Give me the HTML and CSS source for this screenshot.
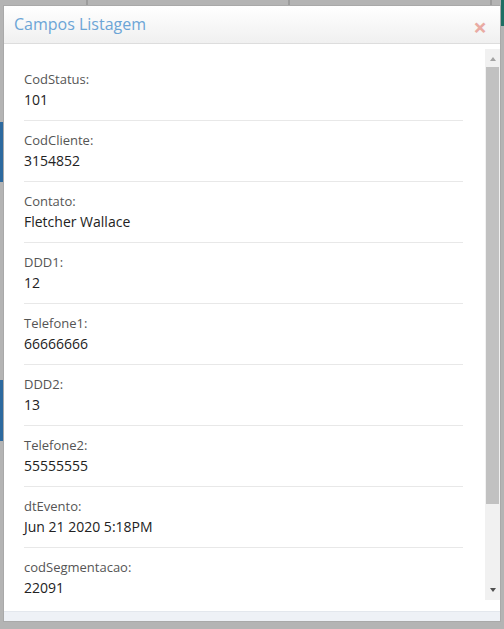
FILE: index.html
```html
<!DOCTYPE html>
<html lang="pt">
<head>
<meta charset="utf-8">
<title>Campos Listagem</title>
<link rel="stylesheet" href="styles.css">
</head>
<body>
<div class="backdrop">
  <span class="bg-line bg-line-1"></span>
  <span class="bg-line bg-line-2"></span>
  <span class="bg-line bg-line-3"></span>
  <span class="bg-teal"></span>
  <span class="bg-blue bg-blue-1"></span>
  <span class="bg-blue bg-blue-2"></span>
</div>
<div class="modal">
  <div class="modal-header">
    <h4 class="modal-title">Campos Listagem</h4>
    <span class="close">&times;</span>
  </div>
  <div class="modal-body">
    <div class="scroll">
      <div class="item"><div class="label">CodStatus:</div><div class="value">101</div></div>
      <div class="item"><div class="label">CodCliente:</div><div class="value">3154852</div></div>
      <div class="item"><div class="label">Contato:</div><div class="value">Fletcher Wallace</div></div>
      <div class="item"><div class="label">DDD1:</div><div class="value">12</div></div>
      <div class="item"><div class="label">Telefone1:</div><div class="value">66666666</div></div>
      <div class="item"><div class="label">DDD2:</div><div class="value">13</div></div>
      <div class="item"><div class="label">Telefone2:</div><div class="value">55555555</div></div>
      <div class="item"><div class="label">dtEvento:</div><div class="value">Jun 21 2020 5:18PM</div></div>
      <div class="item"><div class="label">codSegmentacao:</div><div class="value">22091</div></div>
    </div>
    <div class="scrollbar" aria-hidden="true">
      <div class="sb-btn sb-up"><span class="arrow-up"></span></div>
      <div class="sb-track"><div class="sb-thumb"></div></div>
      <div class="sb-btn sb-down"><span class="arrow-down"></span></div>
    </div>
  </div>
  <div class="modal-footer"></div>
</div>
</body>
</html>
```
FILE: styles.css
```css
html, body {
  margin: 0;
  padding: 0;
}
body {
  width: 504px;
  height: 629px;
  overflow: hidden;
  background: #b4b4b4;
  font-family: "Open Sans", "Liberation Sans", sans-serif;
  position: relative;
  padding: 5px 3px 0 3px;
  box-sizing: border-box;
}
.backdrop {
  position: absolute;
  inset: 0;
}
.bg-line {
  position: absolute;
  top: 0;
  height: 6px;
  width: 2px;
  background: #9c9c9c;
}
.bg-line-1 { left: 86px; }
.bg-line-2 { left: 288px; }
.bg-line-3 { left: 490px; }
.bg-teal {
  position: absolute;
  right: 0;
  top: 0;
  width: 3px;
  height: 26px;
  background: #1e6e63;
}
.bg-blue {
  position: absolute;
  left: 0;
  width: 3px;
  background: #2d6a9f;
}
.bg-blue-1 { top: 122px; height: 60px; }
.bg-blue-2 { top: 380px; height: 61px; }

.modal {
  position: relative;
  width: 498px;
  height: 617px;
  background: #fff;
  border: 1px solid #a9a9a9;
  box-sizing: border-box;
  display: flex;
  flex-direction: column;
}
.modal-header {
  height: 38px;
  box-sizing: border-box;
  flex: none;
  background: linear-gradient(#ffffff, #f0f0f0);
  border-bottom: 1px solid #dddddd;
  display: flex;
  align-items: center;
  justify-content: space-between;
  padding: 0 13px 0 10px;
}
.modal-title {
  margin: 0;
  font-size: 16px;
  font-weight: 400;
  color: #6ca5d6;
  line-height: 22px;
  position: relative;
  top: -1px;
}
.close {
  font-size: 24px;
  font-weight: 700;
  color: #e9aba3;
  line-height: 20px;
  position: relative;
  top: 2px;
}
.modal-body {
  flex: 1;
  min-height: 0;
  padding: 5px 0 11px 0;
  display: flex;
}
.scroll {
  flex: 1;
  min-width: 0;
  overflow: hidden;
  padding: 11px 22px 0 20px;
}
.scrollbar {
  width: 15px;
  flex: none;
  background: #f1f1f1;
  display: flex;
  flex-direction: column;
}
.sb-btn {
  flex: none;
  display: flex;
  justify-content: center;
}
.sb-up {
  height: 18px;
  padding-top: 8px;
  box-sizing: border-box;
}
.sb-down {
  height: 17px;
  padding-top: 5px;
  box-sizing: border-box;
}
.arrow-up {
  width: 0;
  height: 0;
  border-left: 3.5px solid transparent;
  border-right: 3.5px solid transparent;
  border-bottom: 4px solid #a3a3a3;
}
.arrow-down {
  width: 0;
  height: 0;
  border-left: 3.5px solid transparent;
  border-right: 3.5px solid transparent;
  border-top: 4px solid #505050;
}
.sb-track {
  flex: 1;
  padding: 0 1px;
}
.sb-thumb {
  height: 437px;
  background: #c1c1c1;
}
.item {
  padding: 9px 0 10px 0;
  border-bottom: 1px solid #e8e8e8;
}
.label {
  font-size: 13px;
  line-height: 21px;
  color: #555555;
}
.value {
  font-size: 14px;
  line-height: 20px;
  color: #222222;
}
.modal-footer {
  flex: none;
  height: 9px;
  background: #eef1f6;
  border-top: 1px solid #e3e7ed;
}
```
